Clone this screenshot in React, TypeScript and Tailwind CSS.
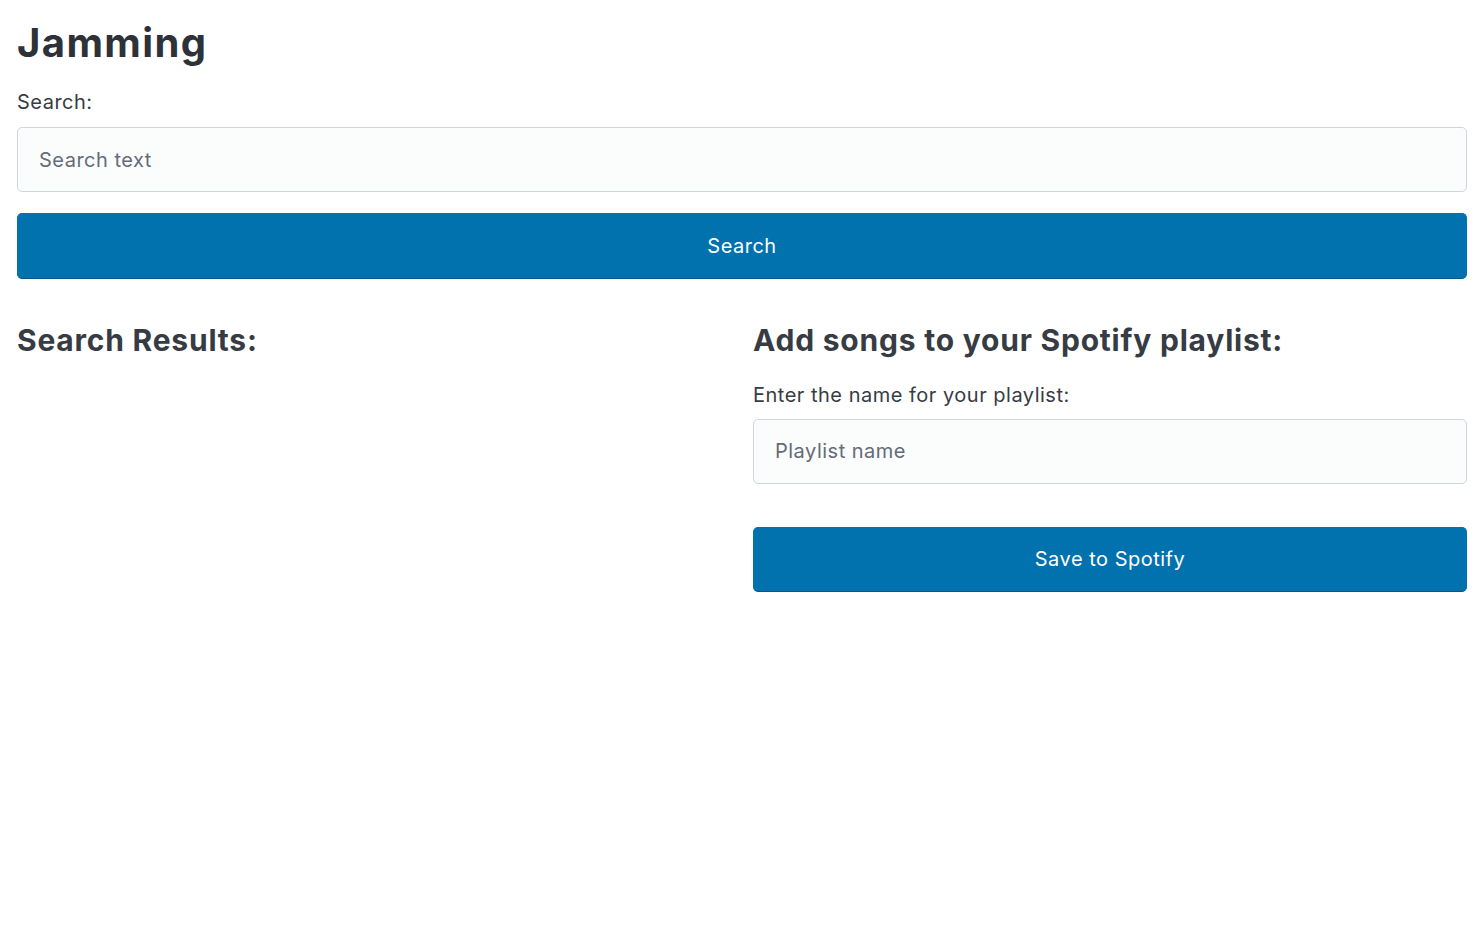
import React from "react";

export default function App() {
  return (
    <div
      className="min-h-[927px] w-full bg-white px-[17px] pt-[20px] text-[#373c44]"
      style={{ fontFamily: "Inter, 'Noto Sans', sans-serif" }}
    >
      <h1 className="text-[40px] font-bold leading-[1.125] tracking-[0.035em] text-[#2d3138]">Jamming</h1>
      <label className="mt-[22px] block text-[20px] leading-[30px] tracking-wide">Search:</label>
      <input
        placeholder="Search text"
        className="mt-[10px] block h-[65px] w-full rounded-[5px] border border-[#cfd5e2] bg-[#fbfcfc] px-[21px] text-[20px] leading-[30px] tracking-wide text-[#373c44] outline-none placeholder:text-[#646b79]"
      />
      <button className="mt-[21px] block h-[66px] w-full rounded-[5px] border border-[#0172ad] border-b-[#02578a] bg-[#0172ad] text-[20px] leading-[30px] tracking-wide text-white">
        Search
      </button>
      <div className="mt-[45px] grid grid-cols-2 gap-[22px]">
        <div>
          <h2 className="text-[30px] font-bold leading-[1.125] tracking-[0.026em] text-[#373c44]">Search Results:</h2>
        </div>
        <div>
          <h2 className="text-[30px] font-bold leading-[1.125] tracking-[0.026em] text-[#373c44]">
            Add songs to your Spotify playlist:
          </h2>
          <label className="mt-[22px] block text-[20px] leading-[30px] tracking-wide">
            Enter the name for your playlist:
          </label>
          <input
            placeholder="Playlist name"
            className="mt-[9px] block h-[65px] w-full rounded-[5px] border border-[#cfd5e2] bg-[#fbfcfc] px-[21px] text-[20px] leading-[30px] tracking-wide text-[#373c44] outline-none placeholder:text-[#646b79]"
          />
          <button className="mt-[43px] block h-[65px] w-full rounded-[5px] border border-[#0172ad] border-b-[#02578a] bg-[#0172ad] text-[20px] leading-[30px] tracking-wide text-white">
            Save to Spotify
          </button>
        </div>
      </div>
    </div>
  );
}
